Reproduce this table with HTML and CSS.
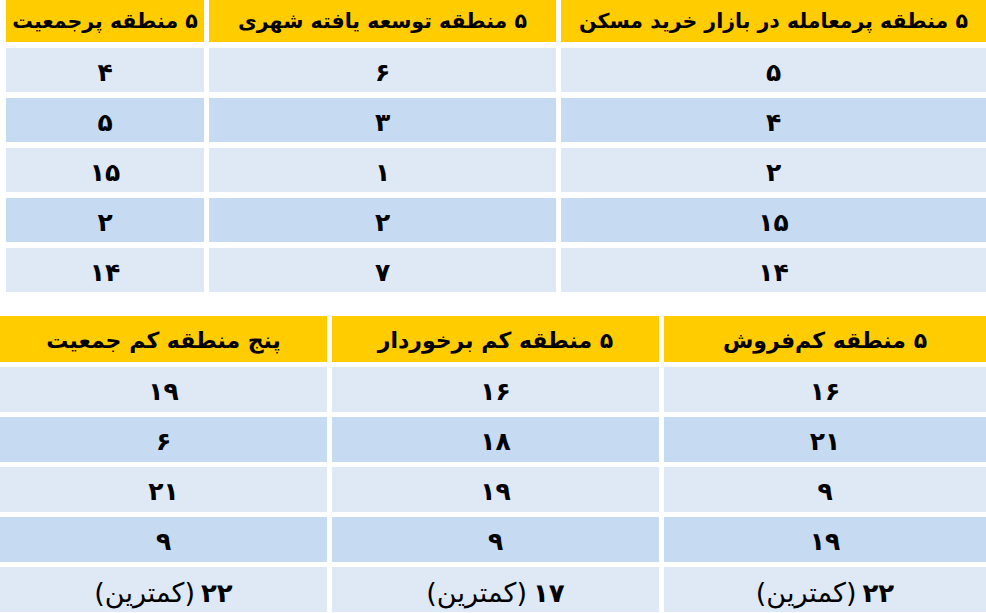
FILE: index.html
```html
<!DOCTYPE html>
<html lang="fa" dir="rtl">
<head>
<meta charset="utf-8">
<title>مناطق</title>
<link rel="stylesheet" href="styles.css">
</head>
<body>
<div class="page">
  <div class="grid grid-top">
    <div class="cell head">۵ منطقه پرمعامله در بازار خرید مسکن</div>
    <div class="cell head">۵ منطقه توسعه یافته شهری</div>
    <div class="cell head">۵ منطقه پرجمعیت</div>

    <div class="cell light">۵</div><div class="cell light">۶</div><div class="cell light">۴</div>
    <div class="cell dark">۴</div><div class="cell dark">۳</div><div class="cell dark">۵</div>
    <div class="cell light">۲</div><div class="cell light">۱</div><div class="cell light">۱۵</div>
    <div class="cell dark">۱۵</div><div class="cell dark">۲</div><div class="cell dark">۲</div>
    <div class="cell light">۱۴</div><div class="cell light">۷</div><div class="cell light">۱۴</div>
  </div>

  <div class="grid grid-bottom">
    <div class="cell head head-lg">۵ منطقه کم‌فروش</div>
    <div class="cell head head-lg">۵ منطقه کم برخوردار</div>
    <div class="cell head head-lg">پنج منطقه کم جمعیت</div>

    <div class="cell light">۱۶</div><div class="cell light">۱۶</div><div class="cell light">۱۹</div>
    <div class="cell dark">۲۱</div><div class="cell dark">۱۸</div><div class="cell dark">۶</div>
    <div class="cell light">۹</div><div class="cell light">۱۹</div><div class="cell light">۲۱</div>
    <div class="cell dark">۱۹</div><div class="cell dark">۹</div><div class="cell dark">۹</div>
    <div class="cell light foot"><span class="num">۲۲</span><span class="note">(کمترین)</span></div>
    <div class="cell light foot"><span class="num">۱۷</span><span class="note">(کمترین)</span></div>
    <div class="cell light foot"><span class="num">۲۲</span><span class="note">(کمترین)</span></div>
  </div>
</div>
</body>
</html>
```

FILE: styles.css
```css
* { box-sizing: border-box; }
html, body {
  margin: 0;
  padding: 0;
  background: #ffffff;
}
body {
  width: 986px;
  height: 613px;
  overflow: hidden;
  font-family: "DejaVu Sans", "Noto Sans", sans-serif;
  color: #000;
}
.page {
  display: flex;
  flex-direction: column;
  gap: 24px;
}
.grid {
  display: grid;
}
.grid-top {
  grid-template-columns: 425px 347px 198px;
  grid-template-rows: 42px repeat(5, 44px);
  column-gap: 5px;
  row-gap: 6px;
  width: 980px;
  margin-left: 6px;
}
.grid-bottom {
  grid-template-columns: 322px 327px 327px;
  grid-template-rows: 46px repeat(5, 45px);
  column-gap: 5px;
  row-gap: 5px;
  width: 986px;
}
.cell {
  display: flex;
  align-items: center;
  justify-content: center;
  font-weight: bold;
  font-size: 25px;
  padding-top: 4px;
  white-space: nowrap;
}
.head {
  background: #ffcc00;
  font-size: 20.5px;
  padding-top: 0;
}
.head-lg {
  font-size: 22px;
  padding-top: 2px;
}
.light { background: #dfe8f5; }
.dark { background: #c6dbf1; }
.foot {
  align-items: baseline;
  padding-top: 10px;
  gap: 6px;
}
.num {
  font-size: 26px;
}
.note {
  font-weight: normal;
  font-size: 27px;
}
```
